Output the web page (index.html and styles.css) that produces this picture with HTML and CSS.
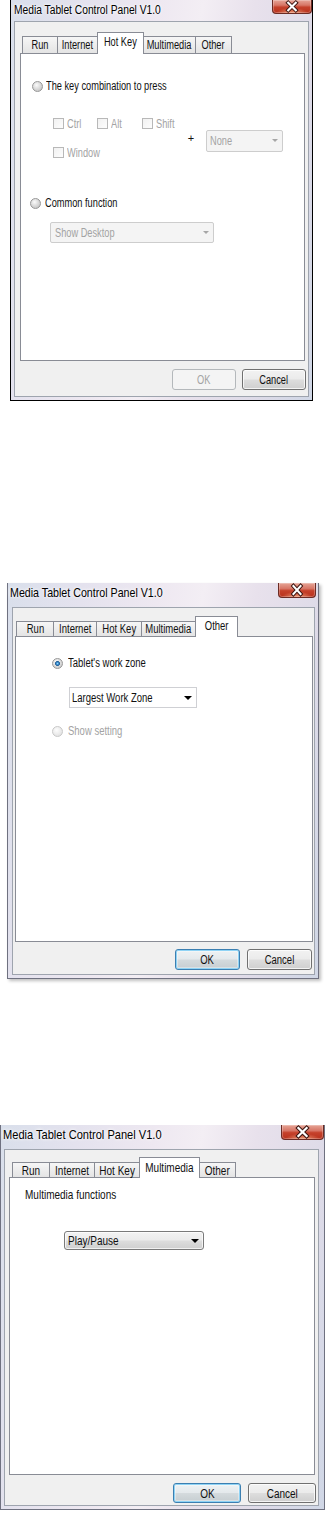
FILE: index.html
```html
<!DOCTYPE html>
<html>
<head>
<meta charset="utf-8">
<title>Media Tablet Control Panel V1.0</title>
<link rel="stylesheet" href="styles.css">
</head>
<body>

<section class="win d1">
  <div class="titlebar">
    <span class="title"><span class="t">Media Tablet Control Panel V1.0</span></span>
    <span class="close"><svg viewBox="0 0 40 14" width="100%" height="100%" preserveAspectRatio="none"><path d="M16 3 L24 11 M24 3 L16 11" stroke="#3a1410" stroke-width="4.2" stroke-linecap="square"/><path d="M16 3 L24 11 M24 3 L16 11" stroke="#fff" stroke-width="2.2" stroke-linecap="square"/></svg></span>
  </div>
  <div class="client">
    <div class="tabs">
      <span class="tab"><span class="t">Run</span></span>
      <span class="tab"><span class="t">Internet</span></span>
      <span class="tab sel"><span class="t">Hot Key</span></span>
      <span class="tab"><span class="t">Multimedia</span></span>
      <span class="tab"><span class="t">Other</span></span>
    </div>
    <div class="panel">
      <label class="opt">
        <span class="radio"></span><span class="t">The key combination to press</span>
      </label>
      <div class="keys">
        <div class="checks">
          <span class="chk"><span class="box"></span><span class="t">Ctrl</span></span>
          <span class="chk"><span class="box"></span><span class="t">Alt</span></span>
          <span class="chk"><span class="box"></span><span class="t">Shift</span></span>
          <span class="chk"><span class="box"></span><span class="t">Window</span></span>
        </div>
        <span class="plus">+</span>
        <span class="combo dis c-none"><span class="t">None</span><span class="arrow"></span></span>
      </div>
      <label class="opt o2">
        <span class="radio"></span><span class="t">Common function</span>
      </label>
      <span class="combo dis c-desk"><span class="t">Show Desktop</span><span class="arrow"></span></span>
    </div>
    <div class="buttons">
      <span class="btn dis"><span class="t">OK</span></span>
      <span class="btn"><span class="t">Cancel</span></span>
    </div>
  </div>
</section>

<section class="win d2">
  <div class="titlebar">
    <span class="title"><span class="t">Media Tablet Control Panel V1.0</span></span>
    <span class="close"><svg viewBox="0 0 40 14" width="100%" height="100%" preserveAspectRatio="none"><path d="M16 3 L24 11 M24 3 L16 11" stroke="#3a1410" stroke-width="4.2" stroke-linecap="square"/><path d="M16 3 L24 11 M24 3 L16 11" stroke="#fff" stroke-width="2.2" stroke-linecap="square"/></svg></span>
  </div>
  <div class="client">
    <div class="tabs">
      <span class="tab"><span class="t">Run</span></span>
      <span class="tab"><span class="t">Internet</span></span>
      <span class="tab"><span class="t">Hot Key</span></span>
      <span class="tab"><span class="t">Multimedia</span></span>
      <span class="tab sel"><span class="t">Other</span></span>
    </div>
    <div class="panel">
      <label class="opt">
        <span class="radio on"></span><span class="t">Tablet's work zone</span>
      </label>
      <span class="combo plain c-zone"><span class="t">Largest Work Zone</span><span class="arrow"></span></span>
      <label class="opt off">
        <span class="radio dis"></span><span class="t">Show setting</span>
      </label>
    </div>
    <div class="buttons">
      <span class="btn def"><span class="t">OK</span></span>
      <span class="btn"><span class="t">Cancel</span></span>
    </div>
  </div>
</section>

<section class="win d3">
  <div class="titlebar">
    <span class="title"><span class="t">Media Tablet Control Panel V1.0</span></span>
    <span class="close"><svg viewBox="0 0 40 14" width="100%" height="100%" preserveAspectRatio="none"><path d="M16 3 L24 11 M24 3 L16 11" stroke="#3a1410" stroke-width="4.2" stroke-linecap="square"/><path d="M16 3 L24 11 M24 3 L16 11" stroke="#fff" stroke-width="2.2" stroke-linecap="square"/></svg></span>
  </div>
  <div class="client">
    <div class="tabs">
      <span class="tab"><span class="t">Run</span></span>
      <span class="tab"><span class="t">Internet</span></span>
      <span class="tab"><span class="t">Hot Key</span></span>
      <span class="tab sel"><span class="t">Multimedia</span></span>
      <span class="tab"><span class="t">Other</span></span>
    </div>
    <div class="panel">
      <span class="caption"><span class="t">Multimedia functions</span></span>
      <span class="combo aero c-play"><span class="t">Play/Pause</span><span class="arrow"></span></span>
    </div>
    <div class="buttons">
      <span class="btn def"><span class="t">OK</span></span>
      <span class="btn"><span class="t">Cancel</span></span>
    </div>
  </div>
</section>

</body>
</html>
```

FILE: styles.css
```css
* { box-sizing: border-box; margin: 0; padding: 0; }
html, body { background: #fff; }
body {
  width: 325px;
  height: 1513px;
  overflow: hidden;
  font-family: "Liberation Sans", Arial, sans-serif;
  color: #111;
}

/* narrow rendering of the dialog font */
.t {
  display: inline-block;
  white-space: nowrap;
  transform: scaleX(var(--sx));
  transform-origin: 0 50%;
}
.tab .t, .btn .t { transform-origin: 50% 50%; }
.title .t { transform: scaleX(.82); }

/* ---------- window chrome ---------- */
.win {
  display: flex;
  flex-direction: column;
  background: linear-gradient(100deg, #d9dfeb 0%, #e4e2ee 20%, #eee8f1 40%, #f3eef4 52%, #e8e1ec 66%, #dedbe8 84%, #d0d7e6 100%);
}
.d1 {
  --sx: .77;
  margin-left: 10px;
  width: 303px;
  height: 401px;
  border: 1px solid #000;
  border-top: 0;
  font-size: 12px;
}
.d2 {
  --sx: .76;
  margin-top: 182px;
  margin-left: 7px;
  width: 312px;
  height: 396px;
  border: 1px solid #6f7180;
  border-top: 0;
  box-shadow: 2px 2px 3px rgba(0, 0, 0, .25);
  font-size: 12.5px;
}
.d3 {
  --sx: .77;
  margin-top: 146px;
  width: 325px;
  height: 385px;
  border: 1px solid #6f7180;
  border-top: 0;
  font-size: 13px;
}

.titlebar {
  display: flex;
  justify-content: space-between;
  align-items: flex-start;
  flex: none;
}
.d1 .titlebar { height: 21px; padding-left: 3px; }
.d2 .titlebar { height: 24px; padding-left: 2px; padding-right: 2px; }
.d3 .titlebar { height: 24px; padding-left: 2px; }

.title {
  margin-top: 3px;
  line-height: 14px;
  white-space: nowrap;
  color: #000;
  text-shadow: 0 0 5px #fff, 0 0 3px #fff;
}
.d1 .title { font-size: 12.5px; }
.d2 .title { font-size: 13px; }
.d3 .title { font-size: 13.5px; }

.close {
  display: block;
  flex: none;
  border: 1px solid #6b2b24;
  border-top: 0;
  border-radius: 0 0 4px 4px;
  background:
    radial-gradient(ellipse 60% 55% at 50% 100%, rgba(255, 190, 150, .75), rgba(255, 190, 150, 0) 70%),
    linear-gradient(#e6a597 0%, #d77666 40%, #c5412b 55%, #b8321d 100%);
  box-shadow: inset 0 0 0 1px rgba(255, 255, 255, .25);
}
.d1 .close { width: 40px; height: 14px; }
.d2 .close { width: 38px; height: 15px; }
.d3 .close { width: 43px; height: 15px; }

.client {
  flex: 1;
  display: flex;
  flex-direction: column;
  background: #f0f0f0;
  border: 1px solid #9ea4ae;
}
.d1 .client { margin: 0 3px 3px 3px; padding: 10px 3px 0 5px; }
.d2 .client { margin: 0 3px 3px 4px; padding: 8px 1px 0 2px; }
.d3 .client { margin: 0 5px 3px 3px; padding: 7px 3px 0 4px; }

/* ---------- tabs ---------- */
.tabs {
  display: flex;
  align-items: flex-end;
  flex: none;
  position: relative;
  z-index: 1;
}
.d1 .tabs { height: 21px; margin-left: 2px; }
.d2 .tabs { height: 20px; margin-left: 1px; }
.d3 .tabs { height: 20px; margin-left: 3px; }

.tab {
  display: flex;
  align-items: center;
  justify-content: center;
  border: 1px solid #898c95;
  border-bottom: 0;
  background: linear-gradient(#f6f6f6, #e4e4e4);
  white-space: nowrap;
  height: 15px;
  padding-top: 1px;
  line-height: 13px;
}
.tab + .tab { margin-left: -1px; }
.d1 .tab { height: 17px; }
.tab.sel {
  background: #fff;
  height: calc(100% + 1px);
  margin-bottom: -1px;
  padding-bottom: 3px;
  position: relative;
  z-index: 2;
}

.d1 .tab:nth-child(1) { width: 36px; }
.d1 .tab:nth-child(2) { width: 41px; }
.d1 .tab:nth-child(3) { width: 47px; }
.d1 .tab:nth-child(4) { width: 53px; }
.d1 .tab:nth-child(5) { width: 37px; }

.d2 .tab:nth-child(1) { width: 38px; }
.d2 .tab:nth-child(2) { width: 44px; }
.d2 .tab:nth-child(3) { width: 46px; }
.d2 .tab:nth-child(4) { width: 55px; }
.d2 .tab:nth-child(5) { width: 43px; }

.d3 .tab:nth-child(1) { width: 38px; }
.d3 .tab:nth-child(2) { width: 46px; }
.d3 .tab:nth-child(3) { width: 46px; }
.d3 .tab:nth-child(4) { width: 61px; }
.d3 .tab:nth-child(5) { width: 37px; }

/* ---------- panel ---------- */
.panel {
  flex: none;
  display: flex;
  flex-direction: column;
  align-items: flex-start;
  background: #fff;
  border: 1px solid #898c95;
}
.d1 .panel { height: 308px; }
.d2 .panel { height: 306px; }
.d3 .panel { height: 298px; }

.opt {
  display: flex;
  align-items: center;
  gap: 3px;
  height: 13px;
  line-height: 13px;
  white-space: nowrap;
}
.d1 .opt { margin: 26px 0 0 11px; }
.d1 .opt.o2 { margin: 39px 0 0 9px; gap: 4px; }
.d2 .opt { margin: 20px 0 0 36px; gap: 5px; }
.d2 .opt.off { margin-top: 17px; color: #a3a3a3; }

.radio {
  flex: none;
  width: 11px;
  height: 11px;
  border-radius: 50%;
  border: 1px solid #979797;
  background: radial-gradient(circle at 40% 35%, #fbfbfb 0%, #dcdcdc 45%, #b9b9b9 100%);
}
.radio.on {
  background:
    radial-gradient(circle at 50% 50%, #8fd0f4 0, #3a8fd0 18%, #1f5a92 34%, rgba(31, 90, 146, 0) 40%),
    radial-gradient(circle at 40% 35%, #fbfbfb 0%, #dcdcdc 50%, #c0c0c0 100%);
}
.radio.dis {
  border-color: #c8c8c8;
  background: radial-gradient(circle at 40% 35%, #fdfdfd 0%, #ececec 50%, #dadada 100%);
}

.keys {
  display: flex;
  align-items: center;
  margin: 25px 0 0 32px;
}
.checks {
  display: grid;
  grid-template-columns: 44px 45px 45px;
  row-gap: 18px;
}
.chk {
  display: flex;
  align-items: center;
  gap: 3px;
  height: 11px;
  color: #a3a3a3;
  white-space: nowrap;
}
.box {
  flex: none;
  width: 11px;
  height: 11px;
  border: 1px solid #b8b8b8;
  background: linear-gradient(135deg, #f1f1f1, #fdfdfd);
}
.plus {
  width: 8px;
  text-align: center;
  line-height: 13px;
  font-size: 11px;
}

/* ---------- combo boxes ---------- */
.combo {
  display: flex;
  align-items: center;
  justify-content: space-between;
  padding: 0 4px 0 3px;
  white-space: nowrap;
}
.arrow {
  flex: none;
  width: 0;
  height: 0;
  border-left: 3px solid transparent;
  border-right: 3px solid transparent;
  border-top: 3px solid #a6a6a6;
}
.combo.dis {
  background: #f4f4f4;
  border: 1px solid #cdcdcd;
  border-radius: 2px;
  color: #a3a3a3;
}
.c-none { width: 77px; height: 22px; margin: 5px 0 0 11px; }
.c-desk { width: 164px; height: 21px; margin: 12px 0 0 29px; padding-left: 4px; }

.combo.plain {
  background: #fff;
  border: 1px solid #cfd0d4;
  padding-left: 2px;
}
.combo.plain .arrow,
.combo.aero .arrow {
  border-left-width: 4px;
  border-right-width: 4px;
  border-top: 4px solid #000;
}
.c-zone { width: 128px; height: 21px; margin: 17px 0 0 53px; }

.caption {
  margin: 10px 0 0 15px;
  line-height: 14px;
}
.combo.aero {
  border: 1px solid #7a7a7a;
  border-radius: 3px;
  background: linear-gradient(#f3f3f3 0%, #ebebeb 48%, #dddddd 52%, #cfcfcf 100%);
  box-shadow: inset 0 0 0 1px rgba(255, 255, 255, .7);
}
.c-play { width: 140px; height: 19px; margin: 29px 0 0 54px; }

/* ---------- buttons ---------- */
.buttons {
  display: flex;
  justify-content: flex-end;
  flex: none;
}
.d1 .buttons { margin: 8px -1px 0 0; gap: 6px; height: 21px; }
.d2 .buttons { margin: 7px 1px 0 0; gap: 7px; height: 21px; }
.d3 .buttons { margin: 8px -1px 0 0; gap: 7px; height: 20px; }

.btn {
  display: flex;
  align-items: center;
  justify-content: center;
  border: 1px solid #707070;
  border-radius: 3px;
  background: linear-gradient(#f2f2f2 0%, #ebebeb 48%, #dddddd 52%, #cfcfcf 100%);
  box-shadow: inset 0 0 0 1px rgba(255, 255, 255, .75);
}
.d1 .btn { width: 64px; }
.d2 .btn { width: 65px; }
.d3 .btn { width: 68px; }
.btn.dis {
  border-color: #b4b8bb;
  background: #f4f4f4;
  box-shadow: none;
  color: #a3a3a3;
}
.btn.def {
  border-color: #3c7fb1;
  box-shadow: inset 0 0 0 1px #8fd3f5, inset 0 0 0 2px rgba(255, 255, 255, .35);
  background: linear-gradient(#eef2f4 0%, #e4e9ec 48%, #d4dadd 52%, #c6cdd1 100%);
}
```
